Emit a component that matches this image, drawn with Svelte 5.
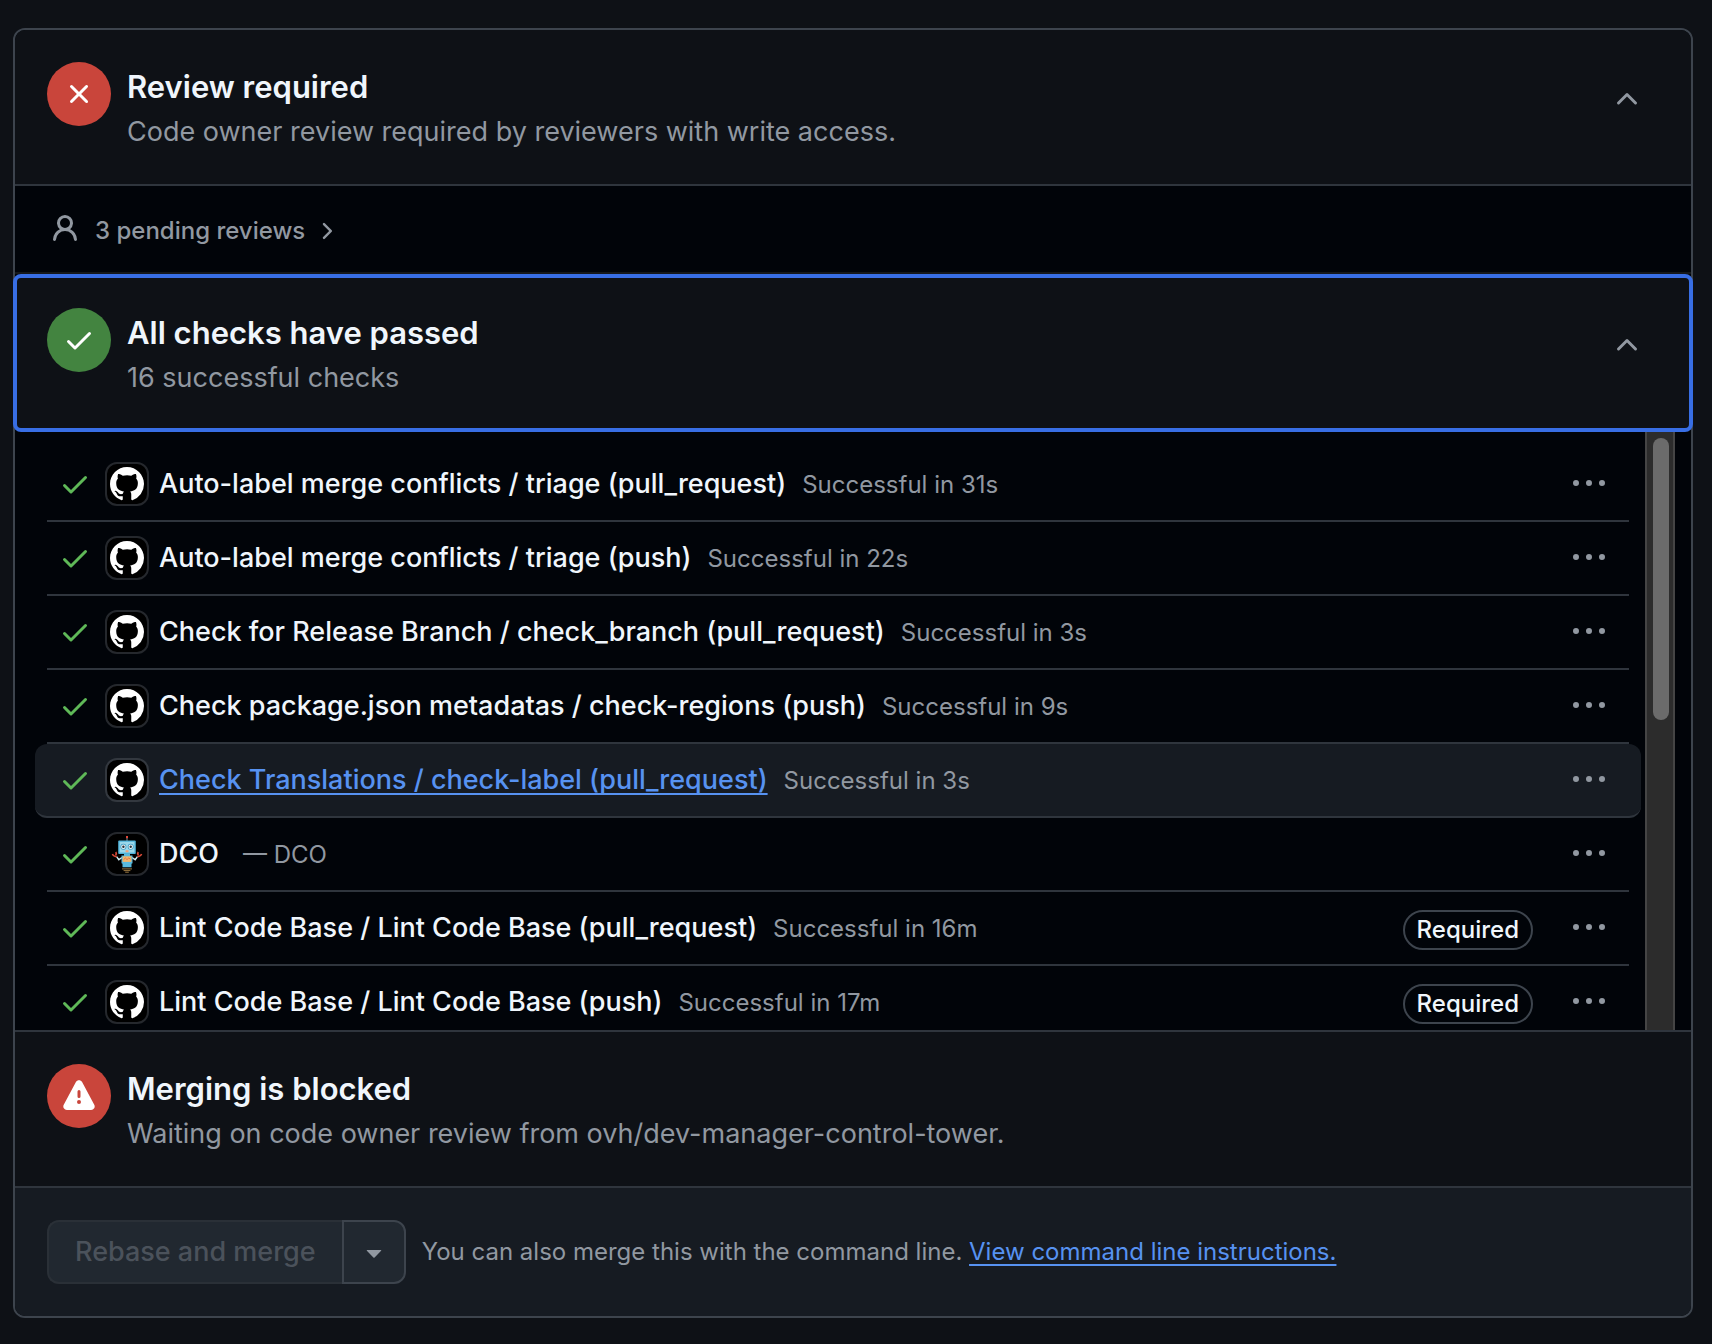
<script lang="ts">
  type Check = {
    name: string;
    note: string;
    app: 'actions' | 'dco';
    required?: boolean;
    active?: boolean;
  };

  const checks: Check[] = [
    { name: 'Auto-label merge conflicts / triage (pull_request)', note: 'Successful in 31s', app: 'actions' },
    { name: 'Auto-label merge conflicts / triage (push)', note: 'Successful in 22s', app: 'actions' },
    { name: 'Check for Release Branch / check_branch (pull_request)', note: 'Successful in 3s', app: 'actions' },
    { name: 'Check package.json metadatas / check-regions (push)', note: 'Successful in 9s', app: 'actions' },
    { name: 'Check Translations / check-label (pull_request)', note: 'Successful in 3s', app: 'actions', active: true },
    { name: 'DCO', note: '— DCO', app: 'dco' },
    { name: 'Lint Code Base / Lint Code Base (pull_request)', note: 'Successful in 16m', app: 'actions', required: true },
    { name: 'Lint Code Base / Lint Code Base (push)', note: 'Successful in 17m', app: 'actions', required: true },
  ];
</script>

{#snippet checkIcon()}
  <svg class="icon" viewBox="0 0 16 16" aria-hidden="true">
    <path d="M13.78 4.22a.75.75 0 0 1 0 1.06l-7.25 7.25a.75.75 0 0 1-1.06 0L2.22 9.28a.751.751 0 0 1 .018-1.042.751.751 0 0 1 1.042-.018L6 10.94l6.72-6.72a.75.75 0 0 1 1.06 0Z" />
  </svg>
{/snippet}

{#snippet chevronUp()}
  <svg class="icon" viewBox="0 0 16 16" aria-hidden="true">
    <path d="M3.22 10.53a.749.749 0 0 1 0-1.06l4.25-4.25a.749.749 0 0 1 1.06 0l4.25 4.25a.749.749 0 1 1-1.06 1.06L8 6.811 4.28 10.53a.749.749 0 0 1-1.06 0Z" />
  </svg>
{/snippet}

{#snippet octocat()}
  <svg class="mark" viewBox="0 0 16 16" aria-hidden="true">
    <path d="M8 0C3.58 0 0 3.58 0 8c0 3.54 2.29 6.53 5.47 7.59.4.07.55-.17.55-.38 0-.19-.01-.82-.01-1.49-2.01.37-2.53-.49-2.69-.94-.09-.23-.48-.94-.82-1.13-.28-.15-.68-.52-.01-.53.63-.01 1.08.58 1.23.82.72 1.21 1.87.87 2.33.66.07-.52.28-.87.51-1.07-1.78-.2-3.64-.89-3.64-3.95 0-.87.31-1.59.82-2.15-.08-.2-.36-1.02.08-2.12 0 0 .67-.21 2.2.82.64-.18 1.32-.27 2-.27.68 0 1.36.09 2 .27 1.53-1.04 2.2-.82 2.2-.82.44 1.1.16 1.92.08 2.12.51.56.82 1.27.82 2.15 0 3.07-1.87 3.75-3.65 3.95.29.25.54.73.54 1.48 0 1.07-.01 1.93-.01 2.2 0 .21.15.46.55.38A8.013 8.013 0 0 0 16 8c0-4.42-3.58-8-8-8z" />
  </svg>
{/snippet}

{#snippet robot()}
  <svg class="robot" viewBox="0 0 40 40" aria-hidden="true">
    <path d="M20 4v3" stroke="#6d8f9c" stroke-width="1" />
    <rect x="19" y="2" width="2" height="2.2" fill="#e0483a" />
    <rect x="11.2" y="6.5" width="17.6" height="13.5" rx="1" fill="#4fb3d9" />
    <rect x="12.6" y="7.8" width="14.8" height="10.8" fill="#9bd8ea" />
    <circle cx="16.4" cy="12.8" r="3" fill="#3c9cc4" />
    <circle cx="23.7" cy="12.8" r="3" fill="#3c9cc4" />
    <circle cx="16.4" cy="12.8" r="2.2" fill="#f4f7f6" />
    <circle cx="23.7" cy="12.8" r="2.2" fill="#f4f7f6" />
    <circle cx="16.4" cy="12.8" r="1.2" fill="#25303a" />
    <circle cx="23.7" cy="12.8" r="1.2" fill="#25303a" />
    <rect x="18.6" y="16.2" width="2.9" height="2" fill="#efa07a" />
    <path d="M15 23.5l-3.2 2.2-2.2-3M25 23.5l3.2 2.2 2.2-3" fill="none" stroke="#cfeaf0" stroke-width="1.4" />
    <path d="M9.6 22.2c-1.8.6-3.4-.2-4.2-2.2M8.6 21c.8-1 .8-2 .2-3M30.4 22.2c1.8.6 3.4-.2 4.2-2.2M31.4 21c-.8-1-.8-2-.2-3" fill="none" stroke="#dd4b38" stroke-width="1.6" />
    <path d="M17 20h6v1.4h2.5v7.8l-1 .6v3.4h-9v-3.4l-1-.6v-7.8H17z" fill="#58bade" />
    <rect x="15.6" y="22.3" width="8.8" height="5.6" fill="#f3b56a" />
    <path d="M16.6 25.6l1.8-1.6 1.6 1.6 1.8-1.6 1.6 1.2" fill="none" stroke="#e2653f" stroke-width=".8" />
    <path d="M15 34.9h10M16.6 36.6h6.8M18.2 38.2h3.6" stroke="#9a7842" stroke-width="1" />
  </svg>
{/snippet}

<main class="page">
  <div class="box">
    <section class="status">
      <span class="badge danger">
        <svg class="icon" viewBox="0 0 16 16" aria-hidden="true">
          <path d="M3.72 3.72a.75.75 0 0 1 1.06 0L8 6.94l3.22-3.22a.749.749 0 0 1 1.275.326.749.749 0 0 1-.215.734L9.06 8l3.22 3.22a.749.749 0 0 1-.326 1.275.749.749 0 0 1-.734-.215L8 9.06l-3.22 3.22a.751.751 0 0 1-1.042-.018.751.751 0 0 1-.018-1.042L6.94 8 3.72 4.78a.75.75 0 0 1 0-1.06Z" />
        </svg>
      </span>
      <div class="summary">
        <h3>Review required</h3>
        <p>Code owner review required by reviewers with write access.</p>
      </div>
      <button class="toggle" type="button" aria-label="Collapse reviews">{@render chevronUp()}</button>
    </section>

    <div class="pending">
      <svg class="icon" viewBox="0 0 16 16" aria-hidden="true">
        <path d="M10.561 8.073a6.005 6.005 0 0 1 3.432 5.142.75.75 0 1 1-1.498.07 4.5 4.5 0 0 0-8.99 0 .75.75 0 0 1-1.498-.07 6.004 6.004 0 0 1 3.431-5.142 3.999 3.999 0 1 1 5.123 0ZM10.5 5a2.5 2.5 0 1 0-5 0 2.5 2.5 0 0 0 5 0Z" />
      </svg>
      <button class="expand" type="button">
        3 pending reviews
        <svg class="icon small" viewBox="0 0 16 16" aria-hidden="true">
          <path d="M6.22 3.22a.75.75 0 0 1 1.06 0l4.25 4.25a.75.75 0 0 1 0 1.06l-4.25 4.25a.751.751 0 0 1-1.042-.018.751.751 0 0 1-.018-1.042L9.94 8 6.22 4.28a.75.75 0 0 1 0-1.06Z" />
        </svg>
      </button>
    </div>

    <section class="status focused">
      <span class="badge success">{@render checkIcon()}</span>
      <div class="summary">
        <h3>All checks have passed</h3>
        <p>16 successful checks</p>
      </div>
      <button class="toggle" type="button" aria-label="Collapse checks">{@render chevronUp()}</button>
    </section>

    <div class="checks">
      <ul>
        {#each checks as check}
          <li class:active={check.active}>
            <span class="passed">{@render checkIcon()}</span>
            <span class="avatar">
              {#if check.app === 'dco'}{@render robot()}{:else}{@render octocat()}{/if}
            </span>
            <div class="label">
              <a href="#details">{check.name}</a>
              <span class="note" class:spaced={check.app === 'dco'}>{check.note}</span>
            </div>
            {#if check.required}<span class="required">Required</span>{/if}
            <button class="more" type="button" aria-label="Check actions">
              <svg class="icon" viewBox="0 0 16 16" aria-hidden="true">
                <path d="M8 9a1.5 1.5 0 1 0 0-3 1.5 1.5 0 0 0 0 3ZM1.5 9a1.5 1.5 0 1 0 0-3 1.5 1.5 0 0 0 0 3Zm13 0a1.5 1.5 0 1 0 0-3 1.5 1.5 0 0 0 0 3Z" />
              </svg>
            </button>
          </li>
        {/each}
      </ul>
      <div class="track"><div class="thumb"></div></div>
    </div>

    <section class="status blocked">
      <span class="badge danger">
        <svg class="icon" viewBox="0 0 16 16" aria-hidden="true">
          <path d="M6.457 1.047c.659-1.234 2.427-1.234 3.086 0l6.082 11.378A1.75 1.75 0 0 1 14.082 15H1.918a1.75 1.75 0 0 1-1.543-2.575ZM8 5a.75.75 0 0 0-.75.75v2.5a.75.75 0 0 0 1.5 0v-2.5A.75.75 0 0 0 8 5Zm1 6a1 1 0 1 0-2 0 1 1 0 0 0 2 0Z" />
        </svg>
      </span>
      <div class="summary">
        <h3>Merging is blocked</h3>
        <p>Waiting on code owner review from ovh/dev-manager-control-tower.</p>
      </div>
    </section>

    <footer>
      <div class="group">
        <button class="merge" type="button" disabled>Rebase and merge</button>
        <button class="methods" type="button" aria-label="Select merge method">
          <svg class="icon" viewBox="0 0 16 16" aria-hidden="true">
            <path d="m4.427 7.427 3.396 3.396a.25.25 0 0 0 .354 0l3.396-3.396A.25.25 0 0 0 11.396 7H4.604a.25.25 0 0 0-.177.427Z" />
          </svg>
        </button>
      </div>
      <p>You can also merge this with the command line. <a href="#cli">View command line instructions.</a></p>
    </footer>
  </div>
</main>

<style>
  :global(body) {
    background: #0e1116;
  }

  .page {
    padding: 28px 19px 26px 13px;
    font-family: Inter, 'Liberation Sans', sans-serif;
    color: #f0f6fc;
  }

  .box {
    border: 2px solid #3d444d;
    border-radius: 12px;
    background: #010409;
  }

  h3,
  p,
  ul {
    margin: 0;
    padding: 0;
  }

  button {
    margin: 0;
    padding: 0;
    border: 0;
    background: none;
    color: inherit;
    font: inherit;
  }

  .icon {
    display: block;
    width: 32px;
    height: 32px;
    fill: currentColor;
    flex: none;
  }

  .icon.small {
    width: 26px;
    height: 26px;
  }

  .status {
    display: flex;
    align-items: flex-start;
    gap: 16px;
    padding: 32px 32px 28px;
    border-bottom: 2px solid #2f353d;
    border-radius: 10px 10px 0 0;
    background: #0e1116;
  }

  .focused {
    margin: 0 -2px;
    padding: 30px 30px 26px;
    border: 4px solid #386ee4;
    border-radius: 8px;
  }

  .blocked {
    border-top: 2px solid #2f353d;
    border-radius: 0;
  }

  .badge {
    display: flex;
    align-items: center;
    justify-content: center;
    width: 64px;
    height: 64px;
    border-radius: 50%;
    color: #fff;
    flex: none;
  }

  .danger {
    background: #c9453b;
  }

  .success {
    background: #438440;
  }

  .summary {
    flex: 1;
    padding-top: 4px;
  }

  h3 {
    font-size: 31px;
    line-height: 42px;
    font-weight: 600;
  }

  .summary p {
    font-size: 27px;
    line-height: 48px;
    color: #9198a1;
  }

  .toggle {
    display: flex;
    align-items: center;
    justify-content: center;
    width: 64px;
    height: 74px;
    color: #9198a1;
  }

  .pending {
    display: flex;
    align-items: center;
    gap: 14px;
    height: 86px;
    padding: 0 34px;
    border-bottom: 2px solid #15181b;
    color: #9198a1;
  }

  .expand {
    display: flex;
    align-items: center;
    gap: 8px;
    padding-top: 4px;
    font-size: 24px;
    line-height: 36px;
    font-weight: 500;
  }

  .checks {
    display: flex;
    height: 598px;
    padding-right: 16px;
  }

  ul {
    flex: 1;
    padding-top: 16px;
    overflow-y: auto;
    scrollbar-width: none;
    list-style: none;
  }

  li {
    display: flex;
    align-items: center;
    height: 72px;
    margin: 0 16px 0 32px;
    border-bottom: 2px solid #2f353d;
  }

  li.active {
    margin: 0 4px 0 20px;
    padding: 0 12px;
    border-radius: 12px;
    background: #161b22;
  }

  .passed {
    margin: 0 14px 0 12px;
    color: #5fb958;
  }

  .avatar {
    display: flex;
    align-items: center;
    justify-content: center;
    box-sizing: border-box;
    width: 44px;
    height: 44px;
    margin-right: 10px;
    border: 2px solid #25282d;
    border-radius: 12px;
    background: #000;
    flex: none;
  }

  .active .avatar {
    border-color: #33383f;
  }

  .mark {
    width: 34px;
    height: 34px;
    fill: #fff;
  }

  .robot {
    width: 40px;
    height: 40px;
  }

  .label {
    display: flex;
    align-items: baseline;
    flex: 1;
    gap: 16px;
    font-size: 27px;
    line-height: 40px;
    white-space: nowrap;
  }

  .label a {
    color: inherit;
    font-weight: 500;
    text-decoration: none;
  }

  .active .label a {
    color: #5792f1;
    text-decoration: underline;
    text-decoration-thickness: 2px;
    text-underline-offset: 4px;
    text-decoration-skip-ink: none;
  }

  .note {
    font-size: 24px;
    color: #9198a1;
  }

  .spaced {
    padding-left: 8px;
  }

  .required {
    margin: 4px 28px 0 0;
    padding: 0 12px;
    border: 2px solid #3d444d;
    border-radius: 20px;
    font-size: 24px;
    line-height: 36px;
    font-weight: 500;
  }

  .more {
    display: flex;
    align-items: center;
    justify-content: center;
    width: 56px;
    height: 56px;
    margin-right: 12px;
    color: #9198a1;
  }

  .track {
    box-sizing: border-box;
    width: 30px;
    padding: 6px;
    border: solid #454545;
    border-width: 0 2px;
    background: #2c2c2c;
  }

  .thumb {
    width: 16px;
    height: 282px;
    margin: 0 auto;
    border-radius: 8px;
    background: #6b6b6b;
  }

  footer {
    display: flex;
    align-items: center;
    gap: 16px;
    padding: 32px;
    border-radius: 0 0 10px 10px;
    background: #161b22;
    color: #9198a1;
    font-size: 24px;
    line-height: 36px;
  }

  footer a {
    color: #5792f1;
    text-decoration-thickness: 2px;
    text-underline-offset: 4px;
  }

  .group {
    display: flex;
  }

  .merge,
  .methods {
    height: 64px;
    border: 2px solid #2a3037;
    background: #212830;
  }

  .merge {
    padding: 0 26px;
    border-right: 0;
    border-radius: 12px 0 0 12px;
    color: #4b525b;
    font-size: 27px;
    font-weight: 500;
  }

  .methods {
    padding: 0 14px;
    border-color: #3d444d;
    border-radius: 0 12px 12px 0;
    color: #9198a1;
  }
</style>
